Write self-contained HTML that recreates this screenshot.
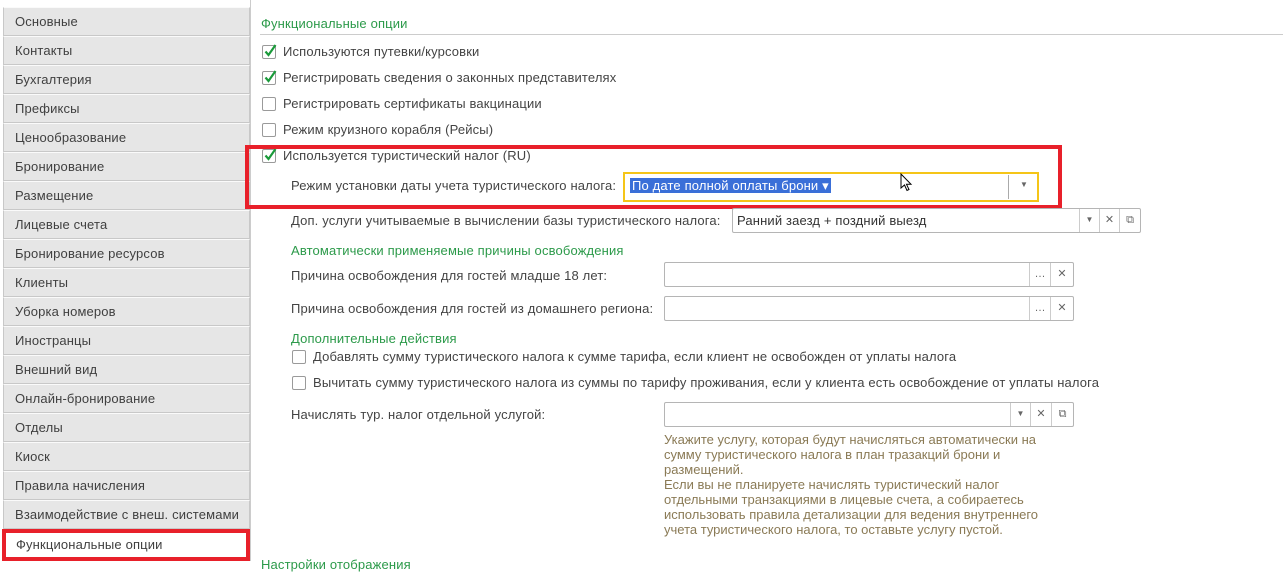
<!DOCTYPE html>
<html><head><meta charset="utf-8"><style>
*{box-sizing:border-box;margin:0;padding:0}
body{width:1286px;height:561px;overflow:hidden;background:#fff;font-family:"Liberation Sans",Arial,sans-serif;font-size:13px;color:#444;position:relative;letter-spacing:0.15px}
.a{position:absolute;white-space:nowrap}
.tab{position:absolute;left:3px;width:247px;height:29px;background:#e6e6e6;border:1px solid #c8c8c8;border-top-color:#fafafa;padding-left:11px;line-height:27px;color:#404040}
.g{color:#2c9a4a}
.cb{position:absolute;width:14px;height:14px;border:1px solid #9a9a9a;border-radius:2px;background:#fff}
.cb svg{position:absolute;left:0;top:-3px}
.inp{position:absolute;border:1px solid #b5b5b5;border-radius:2px;background:#fff;height:25px}
.btn{position:absolute;top:0;height:23px;width:30px;border-left:1px solid #ccc;text-align:center;line-height:22px;color:#666;font-size:11px;letter-spacing:0}
.help{position:absolute;left:664px;top:432px;width:400px;line-height:15px;font-size:13px;color:#8a7a55;letter-spacing:0}
</style></head><body>
<div style="position:absolute;left:250px;top:0;width:1px;height:561px;background:#ccc"></div>
<div class="tab" style="top:7px">Основные</div>
<div class="tab" style="top:36px">Контакты</div>
<div class="tab" style="top:65px">Бухгалтерия</div>
<div class="tab" style="top:94px">Префиксы</div>
<div class="tab" style="top:123px">Ценообразование</div>
<div class="tab" style="top:152px">Бронирование</div>
<div class="tab" style="top:181px">Размещение</div>
<div class="tab" style="top:210px">Лицевые счета</div>
<div class="tab" style="top:239px">Бронирование ресурсов</div>
<div class="tab" style="top:268px">Клиенты</div>
<div class="tab" style="top:297px">Уборка номеров</div>
<div class="tab" style="top:326px">Иностранцы</div>
<div class="tab" style="top:355px">Внешний вид</div>
<div class="tab" style="top:384px">Онлайн-бронирование</div>
<div class="tab" style="top:413px">Отделы</div>
<div class="tab" style="top:442px">Киоск</div>
<div class="tab" style="top:471px">Правила начисления</div>
<div class="tab" style="top:500px">Взаимодействие с внеш. системами</div>
<div class="tab" style="top:529px;background:#fff;border:4px solid #e8202a;left:2px;width:248px;height:32px;padding-left:10px;line-height:24px">Функциональные опции</div>

<div class="a g" style="left:261px;top:16px">Функциональные опции</div>
<div style="position:absolute;left:260px;top:34px;width:1023px;height:1px;background:#ccc"></div>

<div class="cb" style="left:262px;top:45px"><svg width="16" height="16" viewBox="0 0 16 16"><path d="M2.5 8.5l3 3.5 7-10" stroke="#1a9a3a" stroke-width="2.2" fill="none"/></svg></div>
<div class="a" style="left:283px;top:44px">Используются путевки/курсовки</div>
<div class="cb" style="left:262px;top:71px"><svg width="16" height="16" viewBox="0 0 16 16"><path d="M2.5 8.5l3 3.5 7-10" stroke="#1a9a3a" stroke-width="2.2" fill="none"/></svg></div>
<div class="a" style="left:283px;top:70px">Регистрировать сведения о законных представителях</div>
<div class="cb" style="left:262px;top:97px"></div>
<div class="a" style="left:283px;top:96px">Регистрировать сертификаты вакцинации</div>
<div class="cb" style="left:262px;top:123px"></div>
<div class="a" style="left:283px;top:122px">Режим круизного корабля (Рейсы)</div>
<div class="cb" style="left:262px;top:149px"><svg width="16" height="16" viewBox="0 0 16 16"><path d="M2.5 8.5l3 3.5 7-10" stroke="#1a9a3a" stroke-width="2.2" fill="none"/></svg></div>
<div class="a" style="left:283px;top:148px">Используется туристический налог (RU)</div>
<div class="a" style="left:291px;top:178px">Режим установки даты учета туристического налога:</div>
<div style="position:absolute;left:623px;top:172px;width:416px;height:30px;border:2px solid #f5c518;background:#fff"></div>
<div class="a" style="left:630px;top:178px;background:#3a6fd8;color:#fff;padding:0 2px;line-height:15px">По дате полной оплаты брони ▾</div>
<div style="position:absolute;left:1008px;top:175px;width:1px;height:24px;background:#aaa"></div>
<div class="a" style="left:1020px;top:180px;font-size:8px;color:#666">▼</div>
<svg style="position:absolute;left:900px;top:173px" width="14" height="20" viewBox="0 0 14 20"><path d="M1 1v14l3.5-3 2.5 5.5 2-1-2.5-5.2h4.5z" fill="#fff" stroke="#000" stroke-width="1"/></svg>
<div style="position:absolute;left:245px;top:145px;width:817px;height:64px;border:4px solid #e8202a"></div>

<div class="a" style="left:291px;top:213px">Доп. услуги учитываемые в вычислении базы туристического налога:</div>
<div class="inp" style="left:732px;top:208px;width:409px"><span class="a" style="left:4px;top:4px;color:#333">Ранний заезд + поздний выезд</span><div class="btn" style="left:346px;width:20px;font-size:8px">▼</div><div class="btn" style="left:366px;width:20px">✕</div><div class="btn" style="left:386px;width:21px">⧉</div></div>

<div class="a g" style="left:291px;top:243px">Автоматически применяемые причины освобождения</div>
<div class="a" style="left:291px;top:268px">Причина освобождения для гостей младше 18 лет:</div>
<div class="inp" style="left:664px;top:262px;width:410px"><div class="btn" style="left:364px;width:21px">…</div><div class="btn" style="left:385px;width:23px">✕</div></div>
<div class="a" style="left:291px;top:301px">Причина освобождения для гостей из домашнего региона:</div>
<div class="inp" style="left:664px;top:296px;width:410px"><div class="btn" style="left:364px;width:21px">…</div><div class="btn" style="left:385px;width:23px">✕</div></div>

<div class="a g" style="left:291px;top:331px">Дополнительные действия</div>
<div class="cb" style="left:292px;top:350px"></div>
<div class="a" style="left:313px;top:349px">Добавлять сумму туристического налога к сумме тарифа, если клиент не освобожден от уплаты налога</div>
<div class="cb" style="left:292px;top:376px"></div>
<div class="a" style="left:313px;top:375px">Вычитать сумму туристического налога из суммы по тарифу проживания, если у клиента есть освобождение от уплаты налога</div>

<div class="a" style="left:291px;top:407px">Начислять тур. налог отдельной услугой:</div>
<div class="inp" style="left:664px;top:402px;width:410px"><div class="btn" style="left:345px;width:20px;font-size:8px">▼</div><div class="btn" style="left:365px;width:21px">✕</div><div class="btn" style="left:386px;width:22px">⧉</div></div>
<div class="help">Укажите услугу, которая будут начисляться автоматически на сумму туристического налога в план тразакций брони и размещений.<br>Если вы не планируете начислять туристический налог отдельными транзакциями в лицевые счета, а собираетесь использовать правила детализации для ведения внутреннего учета туристического налога, то оставьте услугу пустой.</div>
<div class="a g" style="left:261px;top:557px">Настройки отображения</div>
</body></html>
